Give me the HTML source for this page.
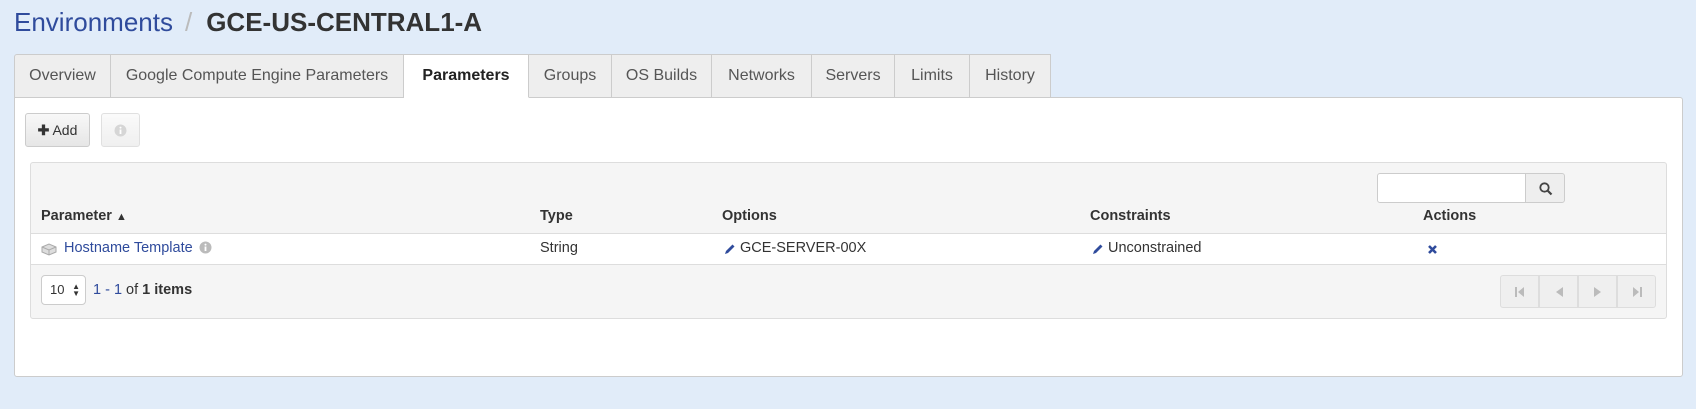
<!DOCTYPE html>
<html><head><meta charset="utf-8"><style>
*{box-sizing:border-box;margin:0;padding:0}
body{width:1696px;height:409px;background:#e1ecf9;font-family:"Liberation Sans",sans-serif;color:#333;position:relative;overflow:hidden;font-size:15px}
.abs{position:absolute}
.title{left:14px;top:5px;font-size:26px;line-height:34px;color:#2f4b9c;white-space:nowrap}
.title .sep{color:#bbb;margin:0 14px 0 12px}
.title b{color:#333}
.tab{position:absolute;top:54px;height:44px;background:#eee;border:1px solid #ccc;border-left:none;color:#555;font-size:16px;line-height:42px;text-align:center}
.tab.first{border-left:1px solid #ccc;border-radius:3px 0 0 0}
.tab.act{background:#fff;border-bottom-color:#fff;color:#222;font-weight:bold;z-index:2}
.panel{left:14px;top:97px;width:1669px;height:280px;background:#fff;border:1px solid #ccc;border-radius:0 3px 3px 3px}
.btn{position:absolute;border:1px solid #ccc;border-radius:3px;background:linear-gradient(#f8f8f8,#e6e6e6);top:113px;height:34px}
.grid{left:30px;top:162px;width:1637px;height:157px;border:1px solid #ddd;border-radius:3px;background:#f5f5f5}
.th{position:absolute;top:208px;font-weight:bold;font-size:14.5px;color:#333}
.td{position:absolute;top:240px;font-size:14.5px;color:#333}
.row{left:31px;top:233px;width:1635px;height:32px;background:#fff;border-top:1px solid #ddd;border-bottom:1px solid #ddd}
.pg{position:absolute;top:275px;width:39px;height:33px;border:1px solid #ddd;background:#efefef;display:flex;align-items:center;justify-content:center}
</style></head><body>
<div class="abs title">Environments<span class="sep">/</span><b>GCE-US-CENTRAL1-A</b></div>

<div class="abs panel"></div>
<div class="tab first" style="left:14px;width:97px">Overview</div>
<div class="tab" style="left:111px;width:293px">Google Compute Engine Parameters</div>
<div class="tab act" style="left:404px;width:125px">Parameters</div>
<div class="tab" style="left:529px;width:83px">Groups</div>
<div class="tab" style="left:612px;width:100px">OS Builds</div>
<div class="tab" style="left:712px;width:100px">Networks</div>
<div class="tab" style="left:812px;width:83px">Servers</div>
<div class="tab" style="left:895px;width:75px">Limits</div>
<div class="tab" style="left:970px;width:81px">History</div>

<div class="btn" style="left:25px;width:65px;font-size:14px;line-height:32px;text-align:center;color:#333"><b>✚</b> Add</div>
<div class="btn" style="left:101px;width:39px;opacity:.6"><svg class="abs" style="left:12px;top:10px" width="13" height="13"><circle cx="6.5" cy="6.5" r="6" fill="#bbb"/><rect x="5.6" y="5.5" width="1.8" height="4.5" fill="#fff"/><circle cx="6.5" cy="3.6" r="1" fill="#fff"/></svg></div>

<div class="abs grid"></div>
<div class="abs" style="left:1377px;top:173px;width:149px;height:30px;background:#fff;border:1px solid #ccc;border-radius:3px 0 0 3px"></div>
<div class="abs" style="left:1525px;top:173px;width:40px;height:30px;background:#eee;border:1px solid #ccc;border-radius:0 3px 3px 0"><svg class="abs" style="left:13px;top:8px" width="14" height="14"><circle cx="5.5" cy="5.5" r="4.2" fill="none" stroke="#444" stroke-width="1.8"/><line x1="8.5" y1="8.5" x2="12.5" y2="12.5" stroke="#444" stroke-width="2.2"/></svg></div>

<div class="th" style="left:41px">Parameter <span style="font-size:11px">▲</span></div>
<div class="th" style="left:540px">Type</div>
<div class="th" style="left:722px">Options</div>
<div class="th" style="left:1090px">Constraints</div>
<div class="th" style="left:1423px">Actions</div>

<div class="abs row"></div>
<svg class="abs" style="left:41px;top:242px" width="16" height="14"><path d="M1 5 L8 2 L15 5 L15 10 L8 13 L1 10Z" fill="#ddd" stroke="#aaa"/><path d="M1 5 L8 8 L15 5 M8 8 V13" fill="none" stroke="#aaa"/></svg>
<div class="td" style="left:64px;color:#2f4b9c">Hostname Template</div>
<svg class="abs" style="left:199px;top:241px" width="13" height="13"><circle cx="6.5" cy="6.5" r="6" fill="#bbb"/><rect x="5.6" y="5.5" width="1.8" height="4.5" fill="#fff"/><circle cx="6.5" cy="3.6" r="1" fill="#fff"/></svg>
<div class="td" style="left:540px">String</div>
<svg class="abs" style="left:724px;top:243px" width="12" height="12"><path d="M1 11 L2 8 L8.5 1.5 L10.5 3.5 L4 10Z" fill="#2f4b9c"/></svg>
<div class="td" style="left:740px">GCE-SERVER-00X</div>
<svg class="abs" style="left:1092px;top:243px" width="12" height="12"><path d="M1 11 L2 8 L8.5 1.5 L10.5 3.5 L4 10Z" fill="#2f4b9c"/></svg>
<div class="td" style="left:1108px">Unconstrained</div>
<svg class="abs" style="left:1427px;top:244px" width="11" height="11"><path d="M2 2 L9 9 M9 2 L2 9" stroke="#2f4b9c" stroke-width="2.6"/></svg>

<div class="abs" style="left:41px;top:275px;width:45px;height:30px;background:#fff;border:1px solid #ccc;border-radius:4px;font-size:13px;line-height:28px;padding-left:8px">10<span style="position:absolute;right:5px;top:0;font-size:8px;line-height:7px;padding-top:7px">▲<br>▼</span></div>
<div class="abs" style="left:93px;top:282px;font-size:14.5px;color:#333"><span style="color:#2f4b9c">1 - 1</span> of <b>1 items</b></div>

<div class="pg" style="left:1500px;border-radius:3px 0 0 3px"><svg width="12" height="12"><rect x="1" y="1" width="2" height="10" fill="#bbb"/><path d="M10 1 L4 6 L10 11Z" fill="#bbb"/></svg></div>
<div class="pg" style="left:1539px"><svg width="12" height="12"><path d="M10 1 L3 6 L10 11Z" fill="#bbb"/></svg></div>
<div class="pg" style="left:1578px"><svg width="12" height="12"><path d="M2 1 L9 6 L2 11Z" fill="#bbb"/></svg></div>
<div class="pg" style="left:1617px;border-radius:0 3px 3px 0"><svg width="12" height="12"><path d="M2 1 L8 6 L2 11Z" fill="#bbb"/><rect x="9" y="1" width="2" height="10" fill="#bbb"/></svg></div>
</body></html>
